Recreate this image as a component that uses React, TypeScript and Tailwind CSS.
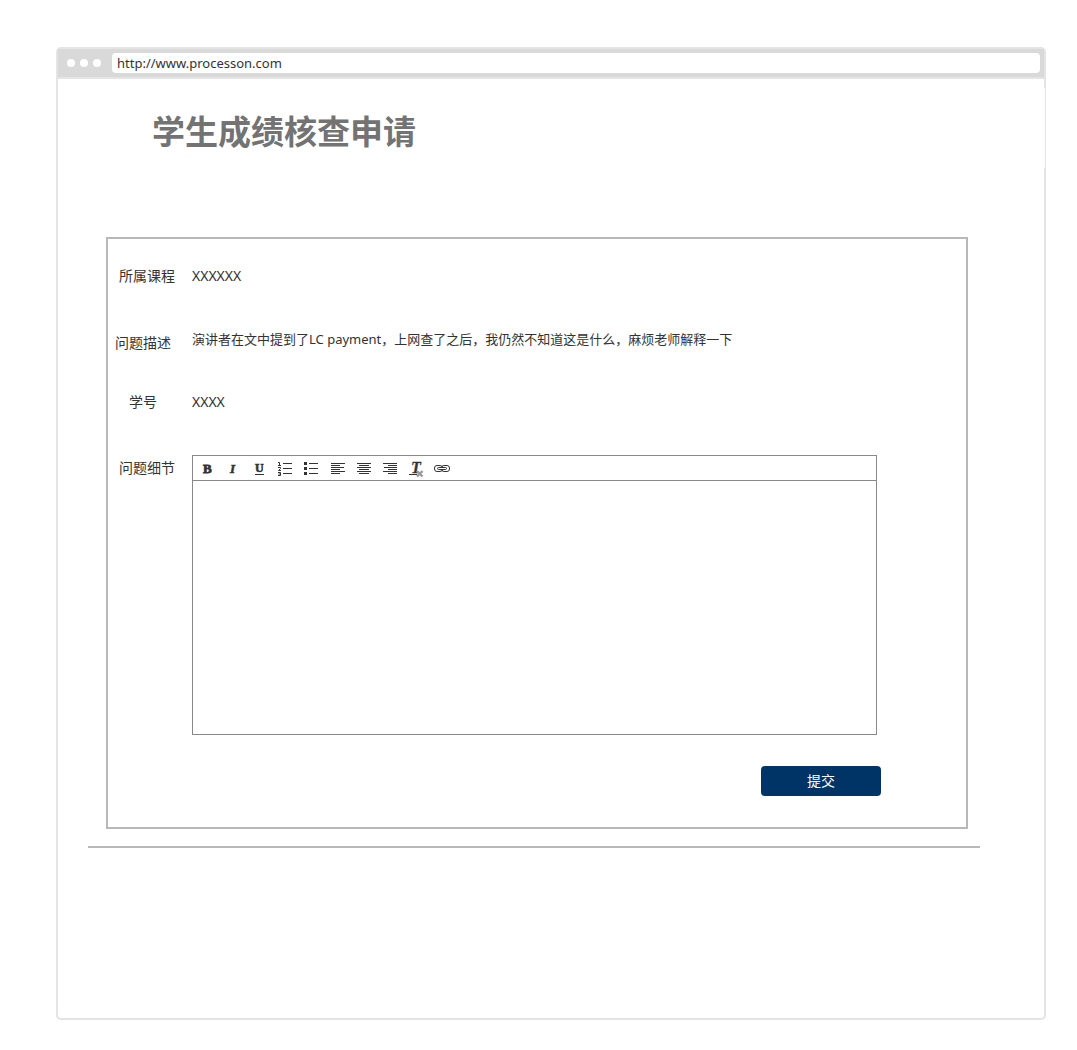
import React from "react";

const SANS = "font-['Noto_Sans','Noto_Sans_CJK_SC',sans-serif]";

function Tool({ label, children }: { label: string; children: React.ReactNode }) {
  return (
    <button type="button" aria-label={label} className="h-6 w-[26px] shrink-0">
      <svg width="26" height="24" viewBox="0 0 26 24" fill="#333" className="block">
        {children}
      </svg>
    </button>
  );
}

function Bars({ items }: { items: number[][] }) {
  return (
    <>
      {items.map(([x, y, w, h]) => (
        <rect key={`${x}-${y}`} x={x} y={y} width={w} height={h} />
      ))}
    </>
  );
}

const SERIF = "font-['Liberation_Serif',serif] font-bold";
const SERIF_ITALIC = "font-['Liberation_Serif',serif] font-bold italic";

function Toolbar() {
  return (
    <div role="toolbar" aria-label="格式" className="flex h-[25px] border-b border-[#888] pl-[2px]">
      <Tool label="粗体">
        <text x="8" y="17" fontSize="13" stroke="#333" strokeWidth="0.8" className={SERIF}>B</text>
      </Tool>
      <Tool label="斜体">
        <text x="9" y="17" fontSize="13" stroke="#333" strokeWidth="0.5" className={SERIF_ITALIC}>I</text>
      </Tool>
      <Tool label="下划线">
        <text x="8" y="16" fontSize="12" stroke="#333" strokeWidth="0.6" className={SERIF}>U</text>
        <rect x="8" y="18" width="9" height="1" />
      </Tool>
      <Tool label="编号列表">
        <Bars items={[[10, 7, 9, 1], [10, 12, 9, 1], [10, 17, 9, 1]]} />
        <path fill="none" stroke="#333" d="M5 6.5h1.5v3M5 9.5h3M5 11.5h2.5v1L5.5 14.5h2.5M5 16.5h2.5v3H5M5.5 18h2" />
      </Tool>
      <Tool label="项目列表">
        <Bars items={[[5, 6, 3, 3], [5, 11, 3, 3], [5, 16, 3, 3], [10, 7, 9, 1], [10, 12, 9, 1], [10, 17, 9, 1]]} />
      </Tool>
      <Tool label="左对齐">
        <Bars items={[[6, 7, 14, 1], [6, 9, 9, 1], [6, 11, 13, 1], [6, 13, 9, 1], [6, 15, 14, 1], [6, 17, 9, 1]]} />
      </Tool>
      <Tool label="居中">
        <Bars items={[[6, 7, 14, 1], [8, 9, 10, 1], [6, 11, 14, 1], [8, 13, 10, 1], [6, 15, 14, 1], [8, 17, 10, 1]]} />
      </Tool>
      <Tool label="右对齐">
        <Bars items={[[6, 7, 14, 1], [11, 9, 9, 1], [7, 11, 13, 1], [11, 13, 9, 1], [6, 15, 14, 1], [11, 17, 9, 1]]} />
      </Tool>
      <Tool label="清除格式">
        <text x="8" y="17" fontSize="16" stroke="#333" strokeWidth="0.3" className={SERIF_ITALIC}>T</text>
        <rect x="6" y="18" width="8" height="1" />
        <path d="M14 15l5.5 5.5M19.5 15l-5.5 5.5" stroke="#999" strokeWidth="2.4" />
      </Tool>
      <Tool label="链接">
        <g fill="none" stroke="#333">
          <rect x="5.5" y="9.5" width="8" height="6" rx="2.5" />
          <rect x="12.5" y="9.5" width="8" height="6" rx="2.5" />
        </g>
        <rect x="8.5" y="11.5" width="9" height="2" rx="1" fill="#fff" stroke="#333" />
      </Tool>
    </div>
  );
}

export default function App() {
  return (
    <main className={`bg-white pt-[47px] pr-[31px] pb-[30px] pl-14 text-sm leading-5 text-[#333] ${SANS}`}>
      <div className="rounded-[5px] border-2 border-[#e4e4e4]">
        <div className="flex h-[30px] items-center border-b-2 border-[#e4e4e4] bg-[#d9d9d9] pr-1 pl-[9px]">
          <div className="flex gap-[5px]">
            <span className="size-2 rounded-full bg-white" />
            <span className="size-2 rounded-full bg-white" />
            <span className="size-2 rounded-full bg-white" />
          </div>
          <input
            type="text"
            aria-label="地址"
            defaultValue="http://www.processon.com"
            className="ml-[11px] h-5 min-w-0 flex-1 rounded bg-white px-[5px] text-[13px] outline-none"
          />
        </div>
        <div className="pt-[9px] pb-[170px]">
          <header className="relative -mr-px h-20 bg-white pt-5 pl-[94px]">
            <h1 className="text-[33px] leading-[48px] font-bold text-[#737373]">学生成绩核查申请</h1>
          </header>
          <form
            onSubmit={(e) => e.preventDefault()}
            className="mt-[69px] mr-[76px] ml-12 border-2 border-[#b8b8b8] pt-[27px] pb-[31px]"
          >
            <dl>
              <div className="flex">
                <dt className="mr-[6px] w-[78px] shrink-0 text-center">所属课程</dt>
                <dd>XXXXXX</dd>
              </div>
              <div className="mt-[43px] flex">
                <dt className="mr-[6px] w-[78px] shrink-0 pt-1 pr-2 text-center">问题描述</dt>
                <dd className="text-[13px]">演讲者在文中提到了LC payment，上网查了之后，我仍然不知道这是什么，麻烦老师解释一下</dd>
              </div>
              <div className="mt-[39px] flex">
                <dt className="mr-[6px] w-[78px] shrink-0 pr-2 text-center">学号</dt>
                <dd>XXXX</dd>
              </div>
            </dl>
            <div className="mt-[43px] flex pr-[89px]">
              <label htmlFor="detail" className="mr-[6px] w-[78px] shrink-0 pt-[3px] text-center">问题细节</label>
              <div className="min-w-0 flex-1 border border-[#888]">
                <Toolbar />
                <textarea id="detail" className="block h-[253px] w-full resize-none p-2 outline-none" />
              </div>
            </div>
            <div className="mt-[31px] flex justify-end pr-[85px]">
              <button type="submit" className="h-[30px] w-[120px] rounded bg-[#003366] text-white">提交</button>
            </div>
          </form>
          <hr className="mt-[17px] mr-16 ml-[30px] border-t-2 border-[#b8b8b8]" />
        </div>
      </div>
    </main>
  );
}
